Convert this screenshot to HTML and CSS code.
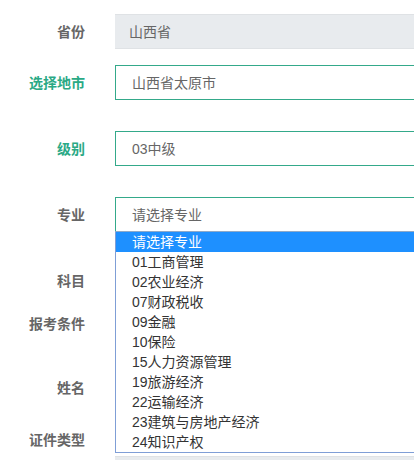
FILE: index.html
```html
<!DOCTYPE html>
<html lang="zh-CN">
<head>
<meta charset="utf-8">
<title>报名信息</title>
<link rel="stylesheet" href="styles.css">
</head>
<body>
<form class="form">
  <div class="row row-1">
    <span class="label">省份</span>
    <div class="control control-disabled">山西省</div>
  </div>
  <div class="row row-2">
    <span class="label label-active">选择地市</span>
    <div class="control control-active">山西省太原市</div>
  </div>
  <div class="row row-3">
    <span class="label label-active">级别</span>
    <div class="control control-active">03中级</div>
  </div>
  <div class="row row-4">
    <span class="label">专业</span>
    <div class="control control-active control-select">
      请选择专业
      <ul class="dropdown">
        <li class="option option-selected">请选择专业</li>
        <li class="option">01工商管理</li>
        <li class="option">02农业经济</li>
        <li class="option">07财政税收</li>
        <li class="option">09金融</li>
        <li class="option">10保险</li>
        <li class="option">15人力资源管理</li>
        <li class="option">19旅游经济</li>
        <li class="option">22运输经济</li>
        <li class="option">23建筑与房地产经济</li>
        <li class="option">24知识产权</li>
      </ul>
    </div>
  </div>
  <div class="row row-5">
    <span class="label">科目</span>
    <div class="control"></div>
  </div>
  <div class="row row-6">
    <span class="label">报考条件</span>
    <div class="control"></div>
  </div>
  <div class="row row-7">
    <span class="label">姓名</span>
    <div class="control"></div>
  </div>
  <div class="row row-8">
    <span class="label">证件类型</span>
    <div class="control control-disabled control-last"></div>
  </div>
</form>
</body>
</html>
```

FILE: styles.css
```css
html, body {
  margin: 0;
  padding: 0;
  background: #ffffff;
  overflow: hidden;
}

body {
  font-family: "Liberation Sans", "Noto Sans CJK SC", sans-serif;
  font-size: 14px;
  color: #666666;
}

.form {
  display: flex;
  flex-direction: column;
  padding-top: 14px;
}

.row {
  display: flex;
  align-items: center;
  height: 35px;
}

.row-2 { margin-top: 16px; }
.row-3 { margin-top: 31px; }
.row-4 { margin-top: 31px; position: relative; z-index: 2; }
.row-5 { margin-top: 31px; }
.row-6 { margin-top: 8px; }
.row-7 { margin-top: 29px; }
.row-8 {
  margin-top: 26px;
  align-items: flex-start;
  height: 29px;
}

.label {
  width: 85px;
  flex: none;
  text-align: right;
  font-weight: bold;
  color: #666666;
  line-height: 18px;
}

.label-active {
  color: #2aa985;
}

.control {
  box-sizing: border-box;
  flex: 1;
  min-width: 0;
  height: 35px;
  margin-left: 30px;
  display: flex;
  align-items: center;
  padding-left: 16px;
  color: #666666;
  line-height: 18px;
  white-space: nowrap;
}

.control-disabled {
  background: #e8ebee;
  border-top: 1px solid #dfe2e5;
  border-bottom: 1px solid #dfe2e5;
  padding-left: 14px;
}

.control-active {
  border: 1px solid #34a98a;
  border-right: none;
}

.control-select {
  position: relative;
}

.control-last {
  margin-top: 25px;
  height: 4px;
  border-bottom: none;
}

.dropdown {
  position: absolute;
  top: 100%;
  left: -1px;
  right: 0;
  margin: 0;
  padding: 0;
  list-style: none;
  background: #ffffff;
  border: 1px solid #7f9ed6;
  border-top-color: #8fa9c7;
  border-right: none;
  box-sizing: border-box;
}

.option {
  height: 20px;
  line-height: 20px;
  padding-left: 16px;
  color: #333333;
  white-space: nowrap;
}

.option-selected {
  background: #1e90ff;
  color: #ffffff;
}
```
